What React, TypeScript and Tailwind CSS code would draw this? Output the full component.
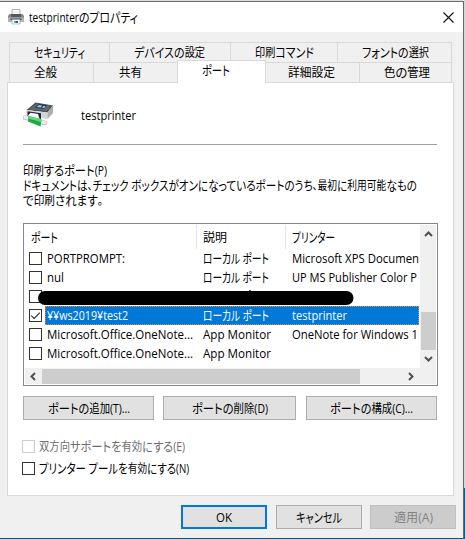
import { useLayoutEffect, useRef, useState, type ReactNode } from "react";

const KANA = /([\u3040-\u30ff]+)/;

/* One line of text condensed or widened to the width of its box; kana are set a size larger than kanji. */
function Label({ children, className = "" }: { children: string; className?: string }) {
  const box = useRef<HTMLSpanElement>(null);
  const text = useRef<HTMLSpanElement>(null);
  const [scale, setScale] = useState(1);
  useLayoutEffect(() => {
    if (box.current && text.current && text.current.offsetWidth) {
      setScale(box.current.clientWidth / text.current.getBoundingClientRect().width);
    }
  }, []);
  return (
    <span ref={box} className={`block h-[15px] shrink-0 leading-[15px] whitespace-nowrap ${className}`}>
      <span
        ref={text}
        className="inline-block h-[15px] origin-left align-top leading-[15px] [font-feature-settings:'palt']"
        style={{ transform: `scaleX(${scale})` }}
      >
        {children.split(KANA).map((run, i) =>
          i % 2 ? <span key={i} className="text-[13px] leading-[15px]">{run}</span> : run,
        )}
      </span>
    </span>
  );
}

function Tab({ label, tab, text }: { label: string; tab: string; text: string }) {
  return (
    <div className={`flex h-5 shrink-0 items-center border-t border-l border-[#d9d9d9] ${tab}`}>
      <Label className={text}>{label}</Label>
    </div>
  );
}

function Check({ on = false, off = false }: { on?: boolean; off?: boolean }) {
  return (
    <span className={`block h-[13px] w-[13px] shrink-0 border bg-white ${off ? "border-[#cccccc]" : "border-[#333333]"}`}>
      {on && (
        <svg viewBox="0 0 11 11" className="block h-[11px] w-[11px]" fill="none" stroke="#333" strokeWidth="1.2">
          <path d="M1.2 5.6 4.2 8.5 9.8 2.6" />
        </svg>
      )}
    </span>
  );
}

function Row({ port, pw, desc, dw, printer, rw, selected = false }: {
  port: string; pw: string; desc: string; dw: string; printer?: string; rw?: string; selected?: boolean;
}) {
  return (
    <div className="flex h-[19px] items-center pl-[5px]">
      <Check on={selected} />
      <div
        className={`ml-[3px] flex h-[19px] w-[374px] items-center border border-dotted ${
          selected ? "border-[#e08a3c] bg-[#0078d7] text-white" : "border-transparent"
        }`}
      >
        <div className="ml-px w-[156px] shrink-0"><Label className={pw}>{port}</Label></div>
        <div className="w-[89px] shrink-0"><Label className={dw}>{desc}</Label></div>
        {printer && <Label className={rw}>{printer}</Label>}
      </div>
    </div>
  );
}

function Button({ className, children }: { className: string; children: ReactNode }) {
  return <button className={`flex h-6 shrink-0 items-center justify-center ${className}`}>{children}</button>;
}

function Arrow({ d }: { d: string }) {
  return (
    <svg viewBox="0 0 9 9" className="block h-[9px] w-[9px]" fill="none" stroke="#505050" strokeWidth="2">
      <path d={d} />
    </svg>
  );
}

function SmallPrinter() {
  return (
    <svg viewBox="0 0 16 16" className="h-4 w-4 shrink-0">
      <path d="M4 .5h8V6H4z" fill="#f4f4f4" stroke="#a5a5a5" strokeWidth=".8" />
      <path d="M1.5 5H3v1h10V5h1.5L16 7v5.5H0V7z" fill="#85898c" />
      <path d="M3 5h10v3H3z" fill="#55585b" />
      <path d="M0 8.5h16V13H0z" fill="#b0b3b5" />
      <path d="M2.5 9.5h11V11h-11z" fill="#4a4d50" />
      <path d="M4 10.5h8V15H4z" fill="#fff" stroke="#999" strokeWidth=".6" />
      <path d="M6 12h2v2H6z" fill="#2fb3c9" />
      <path d="M8 12h2v2H8z" fill="#176c98" />
    </svg>
  );
}

function LargePrinter() {
  return (
    <svg viewBox="0 0 32 26" className="h-[26px] w-8 shrink-0">
      <path d="M3.5 8 12.5.5 30 3.5 24.500 10.500z" fill="#4d5357" />
      <path d="m6 7.500 7.500-6 14.500 2.500-4 5z" fill="#5f666b" />
      <path d="m11.500 5.500 4.500-3.800 8 1.400-3.500 3.900z" fill="#243c52" />
      <path d="m13.500 5 2.500-2 3 .6-1 2zM19 5.800l1.500-2 2 .4-1.500 2z" fill="#8fc6e2" />
      <path d="m3.500 8 21 2.500v6.500L3.500 14z" fill="#d3d6d8" />
      <path d="M24.500 10.500 30 3.500V11l-5.500 6z" fill="#a9aeb2" />
      <path d="m4.500 9.300 13.500 2V17L4.500 14z" fill="#23282b" />
      <path d="m7.500 10.800 7.500 1.200 1.500 5L4 14.800z" fill="#f6f7f7" />
      <path d="m2 15.500 20 5.500" stroke="#bcc4c2" strokeWidth="4.6" strokeLinecap="round" />
      <path d="m2 15.200 20 5.500" stroke="#edf0ef" strokeWidth="3.200" strokeLinecap="round" />
      <path d="m5.500 14 13 3.500-1 7L5 19.500z" fill="#22a747" />
      <path d="m5.500 14 13 3.500-.4 2.500L5.300 16.500z" fill="#5fdc70" />
    </svg>
  );
}

export default function App() {
  return (
    <div className="flex h-[539px] w-[465px] overflow-hidden bg-[#f0f0f0] font-['Open_Sans','Noto_Sans_CJK_JP',sans-serif] text-[12px] text-black">
      <div className="flex w-[463px] shrink-0 flex-col">
        <div className="h-px shrink-0 bg-[#dddddd]" />
        <header className="flex h-[31px] shrink-0 items-center border-t border-[#6b6b6b] bg-white pl-2">
          <SmallPrinter />
          <Label className="ml-[5px] w-[109px]">testprinterのプロパティ</Label>
          <svg viewBox="0 0 11 11" className="ml-[305px] h-[11px] w-[11px]" stroke="#111" strokeWidth="1.1">
            <path d="m.5.5 10 10m0-10-10 10" />
          </svg>
        </header>

        <div className="flex h-[506px] shrink-0 flex-col pt-[10px] pl-[7px]">
          <div className="ml-[2px] flex h-5 shrink-0">
            <Tab label="セキュリティ" tab="w-[100px] pl-6" text="w-[51px]" />
            <Tab label="デバイスの設定" tab="w-[121px] pl-6" text="w-[71px]" />
            <Tab label="印刷コマンド" tab="w-[107px] pl-6" text="w-[59px]" />
            <Tab label="フォントの選択" tab="w-[115px] border-r pl-6" text="w-[67px]" />
          </div>
          <div className="ml-[2px] flex h-5 shrink-0">
            <Tab label="全般" tab="w-[84px] pl-6" text="w-[23px]" />
            <Tab label="共有" tab="w-[84px] pl-[25px]" text="w-[23px]" />
            <div className="z-10 -mt-[2px] flex h-[23px] w-[89px] shrink-0 items-center border-x border-t border-[#d9d9d9] bg-white pb-[3px] pl-6">
              <Label className="w-[28px]">ポート</Label>
            </div>
            <Tab label="詳細設定" tab="w-[93px] border-l-0 pl-[22px]" text="w-[47px]" />
            <Tab label="色の管理" tab="w-[93px] border-r pl-6" text="w-[46px]" />
          </div>

          <main className="flex h-[414px] w-[447px] shrink-0 flex-col border border-[#d9d9d9] bg-white pl-[15px]">
            <div className="flex h-[62px] w-[414px] shrink-0 border-b border-[#a0a0a0] pt-[19px]">
              <LargePrinter />
              <Label className="mt-[6px] ml-[26px] w-[55px]">testprinter</Label>
            </div>
            <div className="mt-[18px] h-[60px] shrink-0">
              <Label className="w-[84px]">印刷するポート(P)</Label>
              <Label className="w-[394px]">ドキュメントは、チェック ボックスがオンになっているポートのうち、最初に利用可能なもの</Label>
              <Label className="w-[80px]">で印刷されます。</Label>
            </div>

            <section className="flex h-[163px] w-[415px] shrink-0 flex-col border border-[#828790] p-px">
              <div className="flex h-[143px] shrink-0">
                <div className="w-[395px]">
                  <div className="flex h-6 items-center">
                    <div className="flex h-6 w-[172px] shrink-0 items-center border-r border-[#e5e5e5] pl-[6px]"><Label className="w-[27px]">ポート</Label></div>
                    <div className="flex h-6 w-[89px] shrink-0 items-center border-r border-[#e5e5e5] pl-[6px]"><Label className="w-[24px]">説明</Label></div>
                    <Label className="ml-[6px] w-[43px]">プリンター</Label>
                  </div>
                  <div className="relative -ml-px">
                    <Row port="PORTPROMPT:" pw="w-[78px]" desc="ローカル ポート" dw="w-[66px]" printer="Microsoft XPS Documen" rw="w-[127px]" />
                    <Row port="nul" pw="w-[17px]" desc="ローカル ポート" dw="w-[66px]" printer="UP MS Publisher Color P" rw="w-[125px]" />
                    <div className="flex h-[19px] items-center pl-[5px]"><Check /></div>
                    <svg viewBox="0 0 318 17" className="absolute top-[40px] left-[13px] h-[17px] w-[318px]">
                      <path d="M8 2H309.500a7 7 0 0 1 0 14H8A7 7 0 0 1 8 2Z" />
                      <path d="M212 1h2v1h-2z" fill="#555" />
                    </svg>
                    <Row selected port="¥¥ws2019¥test2" pw="w-[81px]" desc="ローカル ポート" dw="w-[66px]" printer="testprinter" rw="w-[55px]" />
                    <Row port="Microsoft.Office.OneNote..." pw="w-[146px]" desc="App Monitor" dw="w-[68px]" printer="OneNote for Windows 1" rw="w-[126px]" />
                    <Row port="Microsoft.Office.OneNote..." pw="w-[146px]" desc="App Monitor" dw="w-[68px]" />
                  </div>
                </div>
                <div className="flex w-4 shrink-0 flex-col items-center bg-[#f0f0f0] pt-[5px]">
                  <Arrow d="m1 6 3.5-3.5L8 6" />
                  <div className="mt-[73px] mb-[4px] h-[38px] w-[15px] shrink-0 bg-[#cdcdcd]" />
                  <Arrow d="m1 3 3.5 3.5L8 3" />
                </div>
              </div>
              <div className="flex h-4 shrink-0 items-center bg-[#f0f0f0] pl-1">
                <Arrow d="M6 1 2.5 4.5 6 8" />
                <div className="mr-[46px] ml-1 h-[15px] w-[318px] shrink-0 bg-[#cdcdcd]" />
                <Arrow d="m3 1 3.5 3.5L3 8" />
              </div>
            </section>

            <div className="mt-[10px] flex h-6 shrink-0">
              <Button className="w-[131px] border border-[#adadad] bg-[#e1e1e1]"><Label className="w-[82px]">ポートの追加(T)...</Label></Button>
              <Button className="ml-[9px] w-[133px] border border-[#adadad] bg-[#e1e1e1]"><Label className="w-[76px]">ポートの削除(D)</Label></Button>
              <Button className="ml-[10px] w-[131px] border border-[#adadad] bg-[#e1e1e1]"><Label className="w-[83px]">ポートの構成(C)...</Label></Button>
            </div>

            <div className="mt-5 -ml-px flex h-[13px] shrink-0 items-center text-[#6d6d6d]">
              <Check off />
              <Label className="ml-[4px] w-[146px]">双方向サポートを有効にする(E)</Label>
            </div>
            <div className="mt-[9px] -ml-px flex h-[13px] shrink-0 items-center">
              <Check />
              <Label className="ml-[4px] w-[150px]">プリンター プールを有効にする(N)</Label>
            </div>
          </main>

          <footer className="mt-[9px] flex h-6 shrink-0 pl-[174px]">
            <Button className="w-[86px] border-2 border-[#0078d7] bg-[#e1e1e1]"><Label className="w-[16px]">OK</Label></Button>
            <Button className="ml-[9px] w-[86px] border border-[#adadad] bg-[#e1e1e1]"><Label className="w-[46px]">キャンセル</Label></Button>
            <Button className="ml-[8px] w-[86px] border border-[#bfbfbf] bg-[#cccccc] text-[#838383]"><Label className="w-[39px]">適用(A)</Label></Button>
          </footer>
        </div>
        <div className="h-px shrink-0 bg-[#174f70]" />
      </div>
      <div className="mt-px w-px shrink-0 bg-[#686868]" />
      <div className="flex w-px shrink-0 flex-col">
        <div className="h-[488px] shrink-0 bg-[#d8d8d8]" />
        <div className="h-[51px] shrink-0 bg-[#075e96]" />
      </div>
    </div>
  );
}
